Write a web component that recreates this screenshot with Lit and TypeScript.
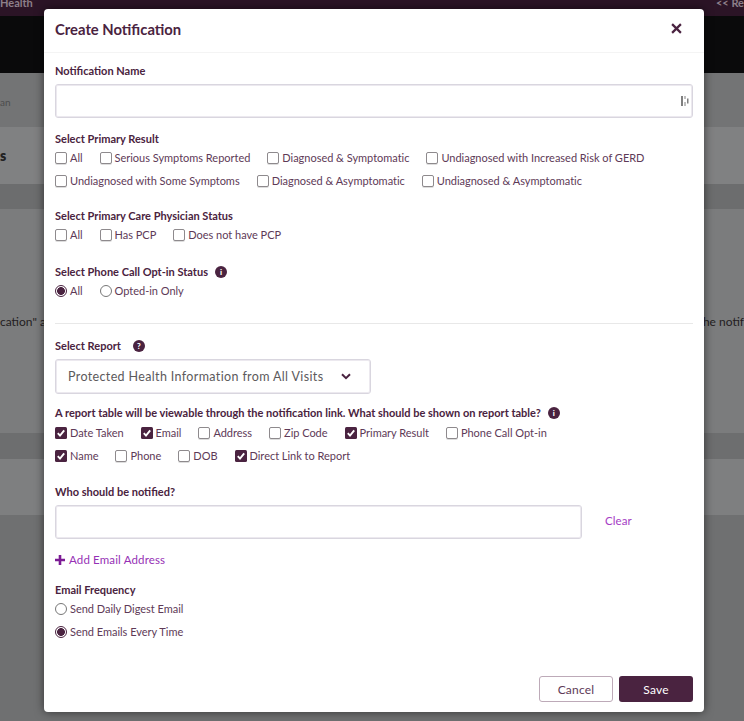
import { LitElement, html, css } from "lit";
import { customElement } from "lit/decorators.js";

const opt = (label: string, checked = false) => html`<label class="opt"><span class="box ${checked ? "on" : ""}">${checked ? html`<svg viewBox="0 0 12 12" width="12" height="12"><path d="M2.8 6.2 5 8.6 9.2 3.4" fill="none" stroke="#fff" stroke-width="1.9"/></svg>` : ""}</span><span>${label}</span></label>`;
const rad = (label: string, checked = false) => html`<label class="opt"><span class="rad ${checked ? "on" : ""}"></span><span>${label}</span></label>`;

@customElement("app-root")
export class AppRoot extends LitElement {
  static styles = css`
    :host { display: block; position: relative; width: 744px; height: 721px; overflow: hidden; font-family: Lato, "Liberation Sans", sans-serif; color: #5e3a57; background: #6f7071; }
    .bg { display: flex; flex-direction: column; height: 721px; font-size: 12px; color: #231c21; }
    .b { display: flex; justify-content: space-between; align-items: center; white-space: nowrap; }
    .b0 { height: 16px; background: #2b1426; color: #8d7f89; font-size: 11px; align-items: flex-start; line-height: 6px; font-weight: 700; }
    .b1 { height: 57px; background: #0a0a0b; }
    .b2 { height: 54px; background: #737475; color: #4c4c4d; font-size: 10px; padding-top: 3px; box-sizing: border-box; }
    .b3 { height: 57px; background: #808182; font-weight: 800; font-size: 14px; color: #222; }
    .b4 { height: 25px; background: #6c6d6e; }
    .b5 { height: 224px; background: #7b7c7d; }
    .b6 { height: 26px; background: #6d6e6f; }
    .b7 { height: 56px; background: #7e7f80; }
    .b8 { flex: 1; background: #6f7071; }
    .modal { position: absolute; left: 44px; top: 9px; width: 660px; height: 703px; box-sizing: border-box; background: #fff; border-radius: 4px; box-shadow: 0 0 10px rgba(0,0,0,.55); display: flex; flex-direction: column; }
    .head { height: 44px; flex: none; box-sizing: border-box; padding: 0 22px 4px 11px; display: flex; justify-content: space-between; align-items: center; border-bottom: 1px solid #f4f4f4; font-size: 14.8px; font-weight: 700; color: #4a2340; }
    .body { padding: 11px 11px 0; display: flex; flex-direction: column; }
    .lab { height: 14px; line-height: 14px; font-size: 11px; font-weight: 700; color: #4a2340; display: flex; align-items: center; white-space: nowrap; }
    .g12 { margin-top: 12px; } .g14 { margin-top: 14px; } .g15 { margin-top: 15px; } .g16 { margin-top: 16px; } .g21 { margin-top: 21px; } .g22 { margin-top: 22px; } .g23 { margin-top: 23px; }
    .input { height: 34px; margin-top: 6px; box-sizing: border-box; border: 1px solid #d9d6df; box-shadow: inset 0 0 0 1px #ece9ef; border-radius: 3px; display: flex; align-items: center; justify-content: flex-end; padding-right: 3px; }
    .rows { margin-top: 5px; display: flex; flex-direction: column; gap: 9px; }
    .tight { gap: 8.5px; margin-top: 6px; }
    .row { display: flex; gap: 17px; height: 14px; }
    .opt { display: flex; align-items: center; gap: 3px; font-size: 11px; letter-spacing: -.02px; line-height: 14px; white-space: nowrap; color: #5e3a57; }
    .box { width: 10px; height: 10px; border: 1px solid #8e8a8d; border-radius: 2px; background: #fff; display: flex; flex: none; box-shadow: 0 1px 0 #ddd; }
    .box.on { width: 12px; height: 12px; border: none; background: #4a2340; box-shadow: none; border-radius: 1.5px; }
    .rad { width: 10px; height: 10px; border: 1px solid #777; border-radius: 50%; background: #fff; flex: none; }
    .rad.on { border-color: #4a2340; background: radial-gradient(circle, #4a2340 0 3.6px, #fff 4.2px); }
    .ic { display: inline-flex; align-items: center; justify-content: center; width: 12px; height: 12px; border-radius: 50%; background: #4a2340; color: #fff; font-size: 8px; font-weight: 900; line-height: 12px; }
    .ml6 { margin-left: 7px; } .ml11 { margin-left: 12px; }
    .hr { height: 1px; background: #e8e8e8; margin-top: 25px; }
    .select { width: 316px; height: 35px; margin-top: 6px; box-sizing: border-box; border: 1px solid #d9d6df; box-shadow: inset 0 0 0 1px #ece9ef; border-radius: 3px; display: flex; align-items: center; justify-content: space-between; padding: 0 19px 0 12px; font-size: 12.5px; letter-spacing: .36px; color: #5c5a5c; white-space: nowrap; }
    .email { display: flex; align-items: center; gap: 23px; margin-top: 6px; }
    .email .input { width: 527px; margin-top: 0; }
    .clear { font-size: 11.5px; letter-spacing: .1px; color: #a53dc4; padding-bottom: 2px; }
    .add { display: flex; align-items: center; gap: 4px; margin-top: 14px; height: 14px; font-size: 11.5px; letter-spacing: .15px; color: #9630b5; }
    .stack { margin-top: 5px; display: flex; flex-direction: column; gap: 9px; }
    .foot { margin-top: auto; padding: 0 11px 10px; display: flex; justify-content: flex-end; gap: 6px; }
    .btn { width: 74px; height: 26px; box-sizing: border-box; border-radius: 3px; display: flex; align-items: center; justify-content: center; font-size: 12px; letter-spacing: .2px; }
    .cancel { border: 1px solid #bdaab8; color: #5e3a57; background: #fff; }
    .save { background: #4a2340; color: #fff; }
  `;

  render() {
    return html`
      <div class="bg">
        <div class="b b0"><span>Health</span><span>&lt;&lt; Re</span></div>
        <div class="b b1"></div>
        <div class="b b2"><span>an</span></div>
        <div class="b b3"><span>s</span></div>
        <div class="b b4"></div>
        <div class="b b5"><span>cation" a</span><span>he notif</span></div>
        <div class="b b6"></div>
        <div class="b b7"></div>
        <div class="b8"></div>
      </div>
      <div class="modal">
        <div class="head">
          <span>Create Notification</span>
          <svg width="11" height="11" viewBox="0 0 10 10"><path d="M1 1 9 9M9 1 1 9" stroke="#4a2340" stroke-width="2" fill="none"/></svg>
        </div>
        <div class="body">
          <div class="lab">Notification Name</div>
          <div class="input">
            <svg width="9" height="12" viewBox="0 0 9 12"><path d="M1 1h2v10H1zM4.500 1h1v3h-1zM4.500 7h1v4h-1zM7 3.500h1.500v5H7z" fill="#808080"/></svg>
          </div>
          <div class="lab g14">Select Primary Result</div>
          <div class="rows">
            <div class="row">${opt("All")}${opt("Serious Symptoms Reported")}${opt("Diagnosed & Symptomatic")}${opt("Undiagnosed with Increased Risk of GERD")}</div>
            <div class="row">${opt("Undiagnosed with Some Symptoms")}${opt("Diagnosed & Asymptomatic")}${opt("Undiagnosed & Asymptomatic")}</div>
          </div>
          <div class="lab g21">Select Primary Care Physician Status</div>
          <div class="rows"><div class="row">${opt("All")}${opt("Has PCP")}${opt("Does not have PCP")}</div></div>
          <div class="lab g23">Select Phone Call Opt-in Status<span class="ic ml6">i</span></div>
          <div class="rows"><div class="row">${rad("All", true)}${rad("Opted-in Only")}</div></div>
          <div class="hr"></div>
          <div class="lab g15">Select Report<span class="ic ml11">?</span></div>
          <div class="select"><span>Protected Health Information from All Visits</span>
            <svg width="10" height="7" viewBox="0 0 10 7"><path d="M1 1.200 5 5.200 9 1.200" stroke="#4a2340" stroke-width="2" fill="none"/></svg>
          </div>
          <div class="lab g12">A report table will be viewable through the notification link. What should be shown on report table?<span class="ic ml6">i</span></div>
          <div class="rows tight">
            <div class="row">${opt("Date Taken", true)}${opt("Email", true)}${opt("Address")}${opt("Zip Code")}${opt("Primary Result", true)}${opt("Phone Call Opt-in")}</div>
            <div class="row">${opt("Name", true)}${opt("Phone")}${opt("DOB")}${opt("Direct Link to Report", true)}</div>
          </div>
          <div class="lab g22">Who should be notified?</div>
          <div class="email"><div class="input"></div><span class="clear">Clear</span></div>
          <div class="add">
            <svg width="10" height="10" viewBox="0 0 10 10"><path d="M5 0v10M0 5h10" stroke="#7c1b95" stroke-width="2.600"/></svg>
            <span>Add Email Address</span>
          </div>
          <div class="lab g16">Email Frequency</div>
          <div class="stack">
            <div class="row">${rad("Send Daily Digest Email")}</div>
            <div class="row">${rad("Send Emails Every Time", true)}</div>
          </div>
        </div>
        <div class="foot">
          <div class="btn cancel">Cancel</div>
          <div class="btn save">Save</div>
        </div>
      </div>
    `;
  }
}
